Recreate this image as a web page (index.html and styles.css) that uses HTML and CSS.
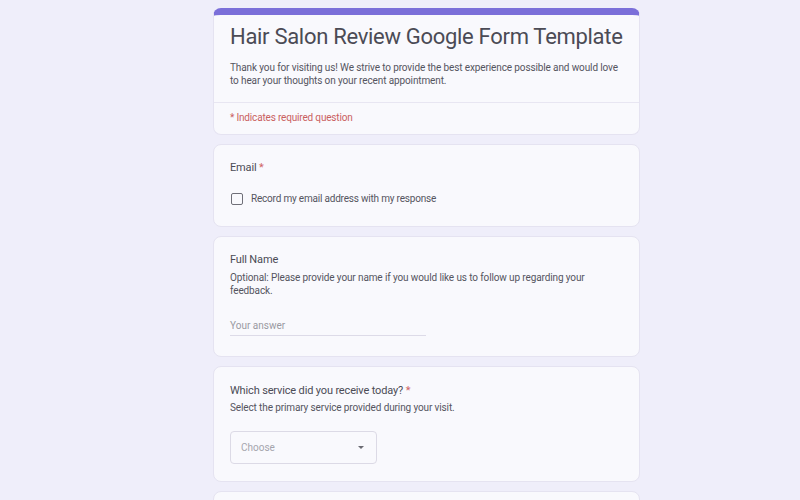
FILE: index.html
```html
<!DOCTYPE html>
<html>
<head>
<meta charset="utf-8">
<link rel="stylesheet" href="styles.css">
</head>
<body>
<main class="form">
  <section class="card header">
    <h1 class="title">Hair Salon Review Google Form Template</h1>
    <p class="intro">Thank you for visiting us! We strive to provide the best experience possible and would love to hear your thoughts on your recent appointment.</p>
    <div class="req-note">* Indicates required question</div>
  </section>

  <section class="card q-email">
    <div class="q-title">Email <span class="star">*</span></div>
    <label class="check-row"><span class="box"></span><span>Record my email address with my response</span></label>
  </section>

  <section class="card q-name">
    <div class="q-title">Full Name</div>
    <p class="q-desc">Optional: Please provide your name if you would like us to follow up regarding your feedback.</p>
    <div class="answer">Your answer</div>
  </section>

  <section class="card q-service">
    <div class="q-title">Which service did you receive today? <span class="star">*</span></div>
    <p class="q-desc">Select the primary service provided during your visit.</p>
    <div class="select"><span>Choose</span><span class="caret"></span></div>
  </section>

  <section class="card q-next"></section>
</main>
</body>
</html>
```

FILE: styles.css
```css
html, body {
  margin: 0;
  padding: 0;
  background: #efeefa;
  font-family: Roboto, "Liberation Sans", sans-serif;
  color: #55555f;
}
.form {
  width: 427px;
  margin-left: 213px;
  padding-top: 8px;
  display: flex;
  flex-direction: column;
  gap: 9px;
}
.card {
  background: #f9f9fd;
  border: 1px solid #e5e3f1;
  border-radius: 8px;
  box-sizing: border-box;
  padding: 0 16px;
}
.header {
  border-top: 7px solid #7b6fd9;
  padding: 7px 0 0;
}
.title {
  margin: 0 16px;
  font-size: 22px;
  font-weight: 400;
  letter-spacing: -0.3px;
  line-height: 30px;
  color: #4b4b55;
}
.intro {
  margin: 9px 16px 0;
  padding-bottom: 15px;
  font-size: 10px;
  letter-spacing: -0.12px;
  line-height: 13px;
  color: #55555f;
}
.req-note {
  border-top: 1px solid #e8e6f2;
  padding: 8px 16px 9px;
  font-size: 10px;
  letter-spacing: -0.17px;
  line-height: 14px;
  color: #c9605f;
}
.q-title {
  font-size: 11px;
  letter-spacing: -0.15px;
  line-height: 16px;
  color: #4b4b55;
}
.star { color: #d06565; }
.q-email { padding-top: 15px; padding-bottom: 20px; }
.check-row {
  margin-top: 16px;
  display: flex;
  align-items: center;
  gap: 8px;
  font-size: 10px;
  letter-spacing: -0.2px;
  line-height: 14px;
  color: #55555f;
}
.box {
  width: 10px;
  height: 10px;
  border: 1.5px solid #6f6f78;
  border-radius: 2px;
  margin-left: 1px;
}
.q-desc {
  margin: 3px 0 0;
  font-size: 10px;
  letter-spacing: -0.12px;
  line-height: 13px;
  color: #55555f;
}
.q-name { padding-top: 15px; padding-bottom: 20px; }
.answer {
  margin-top: 22px;
  width: 196px;
  font-size: 10px;
  line-height: 14px;
  color: #9a9aa2;
  padding-bottom: 2px;
  border-bottom: 1px solid #dddbe8;
}
.q-service { padding-top: 16px; padding-bottom: 17px; }
.q-service .q-desc { margin-top: 2px; }
.select {
  margin-top: 17px;
  width: 147px;
  height: 33px;
  box-sizing: border-box;
  border: 1px solid #dcdae6;
  border-radius: 4px;
  display: flex;
  align-items: center;
  justify-content: space-between;
  padding: 0 12px 0 10px;
  font-size: 10px;
  color: #a5a5ad;
}
.caret {
  width: 0;
  height: 0;
  border-left: 3.5px solid transparent;
  border-right: 3.5px solid transparent;
  border-top: 3.5px solid #6a6a72;
}
.q-next { height: 60px; }
```
